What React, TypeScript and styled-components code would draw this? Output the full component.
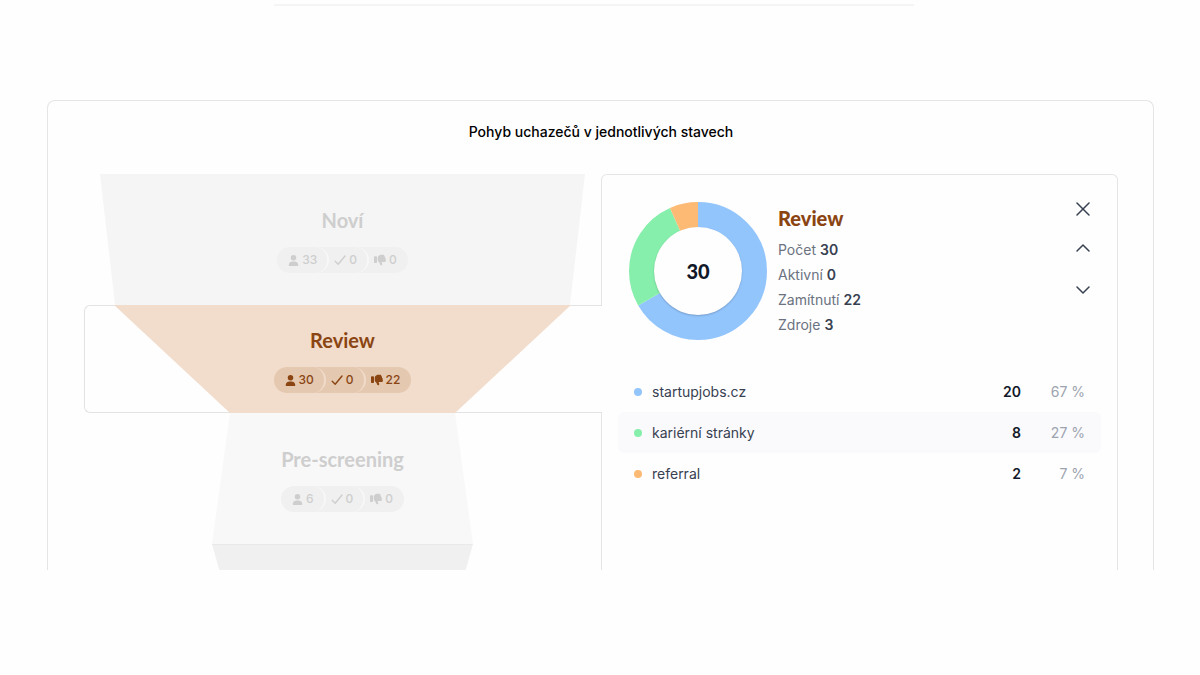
import React from "react";
import styled, { createGlobalStyle, css } from "styled-components";
import { ChevronDown, ChevronUp, X } from "lucide-react";
import { FaThumbsDown, FaUser } from "react-icons/fa6";

const GlobalStyle = createGlobalStyle`
  *, *::before, *::after { box-sizing: border-box; }
  body {
    margin: 0;
    background: #fefefe;
    color: #111827;
    font-family: Inter, "Liberation Sans", sans-serif;
    font-size: 14px;
  }
`;

const headingFont = css`
  font-family: Lato, Inter, sans-serif;
  font-size: 20px;
  line-height: 28px;
`;

const Page = styled.main`
  padding: 4px 46px 0 47px;
`;

const TopBar = styled.div`
  padding: 0 14px 94px 0;
`;

const TopRule = styled.hr`
  max-width: 640px;
  height: 2px;
  margin: 0 auto;
  border: 0;
  background: #f5f5f5;
`;

const Card = styled.section`
  padding: 21px 35px 0 36px;
  border: 1px solid #e5e5e5;
  border-bottom: 0;
  border-radius: 8px 8px 0 0;
`;

const CardTitle = styled.h2`
  margin: 0 0 32px;
  font-size: 14px;
  line-height: 20px;
  font-weight: 500;
  text-align: center;
  color: #000;
`;

const Columns = styled.div`
  display: grid;
  grid-template-columns: 1fr 1fr;
`;

const Funnel = styled.ol`
  margin: 0;
  padding: 0;
  list-style: none;
`;

type Edges = { $top: number; $bottom: number };

const StageRow = styled.li<{ $active?: boolean }>`
  position: relative;
  ${({ $active }) =>
    $active &&
    css`
      z-index: 1;
      margin-right: -1px;
      padding-right: 1px;
      background: #fefefe;
      border: 1px solid #e3e3e3;
      border-right: 0;
      border-radius: 6px 0 0 6px;
    `}
`;

const StageShape = styled.div<Edges & { $active?: boolean; $fill: string }>`
  display: flex;
  flex-direction: column;
  align-items: center;
  gap: 13px;
  margin: ${({ $active }) => ($active ? "-1px 16px -1px 15px" : "0 16px")};
  padding: ${({ $active }) => ($active ? "21px 0 20px" : "32px 0")};
  background: ${({ $fill }) => $fill};
  color: ${({ $active }) => ($active ? "#8a4513" : "#cecece")};
  clip-path: ${({ $top, $bottom }) =>
    `polygon(${$top}% 0, ${100 - $top}% 0, ${100 - $bottom}% 100%, ${$bottom}% 100%)`};
`;

const NextStage = styled.div<Edges>`
  height: 26px;
  margin: 0 16px;
  background: #f0f0f0;
  border-top: 1px solid #e9e9e9;
  clip-path: ${({ $top, $bottom }) =>
    `polygon(${$top}% 0, ${100 - $top}% 0, ${100 - $bottom}% 100%, ${$bottom}% 100%)`};
`;

const StageName = styled.h3`
  ${headingFont}
  margin: 0;
  font-weight: 700;
`;

const Pills = styled.div<{ $active?: boolean }>`
  display: flex;
  height: 26px;
  border-radius: 13px;
  overflow: hidden;
  background: ${({ $active }) => ($active ? "#e4c8b0" : "#f0f0f0")};
  --edge: ${({ $active }) => ($active ? "#f1dccb" : "#f7f7f7")};
`;

const Pill = styled.span`
  display: flex;
  align-items: center;
  gap: 3px;
  padding: 0 11px 0 5px;
  font-size: 12px;
  line-height: 16px;
  font-weight: 500;

  &:not(:last-child) {
    border-right: 2px solid var(--edge);
    border-radius: 0 13px 13px 0;
    padding-right: 10px;
  }
  &:first-child {
    padding-left: 11px;
  }
`;

const Detail = styled.section`
  padding: 16px;
  border: 1px solid #e5e5e5;
  border-bottom: 0;
  border-radius: 6px 6px 0 0;
`;

const DetailHeader = styled.header`
  display: flex;
  align-items: flex-start;
  margin-bottom: 31px;
  padding: 6px 6px 0 11px;
`;

const Donut = styled.div`
  display: grid;
  place-items: center;
  margin-top: 5px;

  > * {
    grid-area: 1 / 1;
  }
  svg {
    display: block;
  }
`;

const DonutHole = styled.strong`
  ${headingFont}
  display: grid;
  place-items: center;
  width: 88px;
  height: 88px;
  border-radius: 50%;
  background: #fefefe;
  box-shadow: 0 1px 2px rgba(0, 0, 0, 0.2);
  font-weight: 900;
`;

const Summary = styled.div`
  flex: 1;
  margin: 7px 0 0 11px;
`;

const SummaryTitle = styled.h3`
  ${headingFont}
  margin: 0 0 5px;
  font-weight: 900;
  color: #8a4513;
`;

const Facts = styled.dl`
  margin: 0;
`;

const Fact = styled.div`
  display: flex;
  gap: 4px;
  line-height: 25px;
  color: #6b7280;

  dd {
    margin: 0;
    font-weight: 600;
    color: #374151;
  }
`;

const Controls = styled.div`
  display: flex;
  flex-direction: column;
  gap: 15px;
`;

const Stepper = styled.div`
  display: flex;
  flex-direction: column;
  gap: 18px;
`;

const IconButton = styled.button`
  display: grid;
  place-items: center;
  width: 24px;
  height: 24px;
  padding: 0;
  border: 0;
  background: none;
  color: #374151;
  cursor: pointer;
`;

const SourceTable = styled.table`
  width: 100%;
  border-collapse: separate;
  border-spacing: 0;
  line-height: 21px;
`;

const SourceRow = styled.tr`
  &:nth-child(even) > * {
    background: #fafafc;
  }
  > * {
    padding: 10px 0;
  }
  > :first-child {
    border-radius: 6px 0 0 6px;
  }
  > :last-child {
    border-radius: 0 6px 6px 0;
  }
`;

const SourceName = styled.th`
  text-align: left;
  font-weight: 400;
  color: #374151;
`;

const SourceLabel = styled.span`
  display: flex;
  align-items: center;
  gap: 10px;
  padding-left: 16px;
`;

const Dot = styled.span<{ $color: string }>`
  width: 8px;
  height: 8px;
  border-radius: 50%;
  background: ${({ $color }) => $color};
`;

const Count = styled.td`
  text-align: right;
  font-weight: 600;
`;

const Share = styled.td`
  width: 80px;
  text-align: right;
  color: #9ca3af;

  && {
    padding-right: 16px;
  }
`;

const CheckIcon = () => (
  <svg width="12" height="12" viewBox="0 0 12 12" fill="none" aria-hidden="true">
    <path d="M1.2 7.2 4.2 10.2 11 2" stroke="currentColor" strokeWidth="1.4" strokeLinecap="round" strokeLinejoin="round" />
  </svg>
);

const stages = [
  { name: "Noví", total: 33, active: 0, rejected: 0, top: 0, bottom: 3.1, fill: "#f5f5f5" },
  { name: "Review", total: 30, active: 0, rejected: 22, top: 2.9, bottom: 26.8, fill: "#f2dccb", selected: true },
  { name: "Pre-screening", total: 6, active: 0, rejected: 0, top: 26.8, bottom: 23.1, fill: "#f8f8f8" },
];

const sources = [
  { name: "startupjobs.cz", count: 20, share: 67, color: "#93c5fd" },
  { name: "kariérní stránky", count: 8, share: 27, color: "#86efac" },
  { name: "referral", count: 2, share: 7, color: "#fdba74" },
];

const facts: [string, number][] = [
  ["Počet", 30],
  ["Aktivní", 0],
  ["Zamítnutí", 22],
  ["Zdroje", 3],
];

const TOTAL = 30;

function DonutChart() {
  let start = 0;
  return (
    <Donut>
      <svg width="138" height="138" viewBox="0 0 138 138" aria-hidden="true">
        <g transform="rotate(-90 69 69)" fill="none" strokeWidth="26">
          {sources.map((s) => {
            const offset = -start;
            start += s.count;
            return (
              <circle
                key={s.name}
                cx="69"
                cy="69"
                r="56"
                pathLength={TOTAL}
                stroke={s.color}
                strokeDasharray={`${s.count} ${TOTAL - s.count}`}
                strokeDashoffset={offset}
              />
            );
          })}
        </g>
      </svg>
      <DonutHole>{TOTAL}</DonutHole>
    </Donut>
  );
}

export default function App() {
  return (
    <>
      <GlobalStyle />
      <Page>
        <TopBar>
          <TopRule />
        </TopBar>
        <Card>
          <CardTitle>Pohyb uchazečů v jednotlivých stavech</CardTitle>
          <Columns>
            <Funnel>
              {stages.map((s) => (
                <StageRow key={s.name} $active={s.selected}>
                  <StageShape $active={s.selected} $top={s.top} $bottom={s.bottom} $fill={s.fill}>
                    <StageName>{s.name}</StageName>
                    <Pills $active={s.selected}>
                      <Pill>
                        <FaUser size={11} />
                        {s.total}
                      </Pill>
                      <Pill>
                        <CheckIcon />
                        {s.active}
                      </Pill>
                      <Pill>
                        <FaThumbsDown size={12} />
                        {s.rejected}
                      </Pill>
                    </Pills>
                  </StageShape>
                </StageRow>
              ))}
              <StageRow>
                <NextStage $top={23.1} $bottom={24.6} />
              </StageRow>
            </Funnel>
            <Detail>
              <DetailHeader>
                <DonutChart />
                <Summary>
                  <SummaryTitle>Review</SummaryTitle>
                  <Facts>
                    {facts.map(([label, value]) => (
                      <Fact key={label}>
                        <dt>{label}</dt>
                        <dd>{value}</dd>
                      </Fact>
                    ))}
                  </Facts>
                </Summary>
                <Controls>
                  <IconButton type="button" aria-label="Zavřít">
                    <X size={24} strokeWidth={1.5} />
                  </IconButton>
                  <Stepper>
                    <IconButton type="button" aria-label="Předchozí stav">
                      <ChevronUp size={24} strokeWidth={1.5} />
                    </IconButton>
                    <IconButton type="button" aria-label="Další stav">
                      <ChevronDown size={24} strokeWidth={1.5} />
                    </IconButton>
                  </Stepper>
                </Controls>
              </DetailHeader>
              <SourceTable>
                <tbody>
                  {sources.map((s) => (
                    <SourceRow key={s.name}>
                      <SourceName scope="row">
                        <SourceLabel>
                          <Dot $color={s.color} />
                          {s.name}
                        </SourceLabel>
                      </SourceName>
                      <Count>{s.count}</Count>
                      <Share>{s.share} %</Share>
                    </SourceRow>
                  ))}
                </tbody>
              </SourceTable>
            </Detail>
          </Columns>
        </Card>
      </Page>
    </>
  );
}
